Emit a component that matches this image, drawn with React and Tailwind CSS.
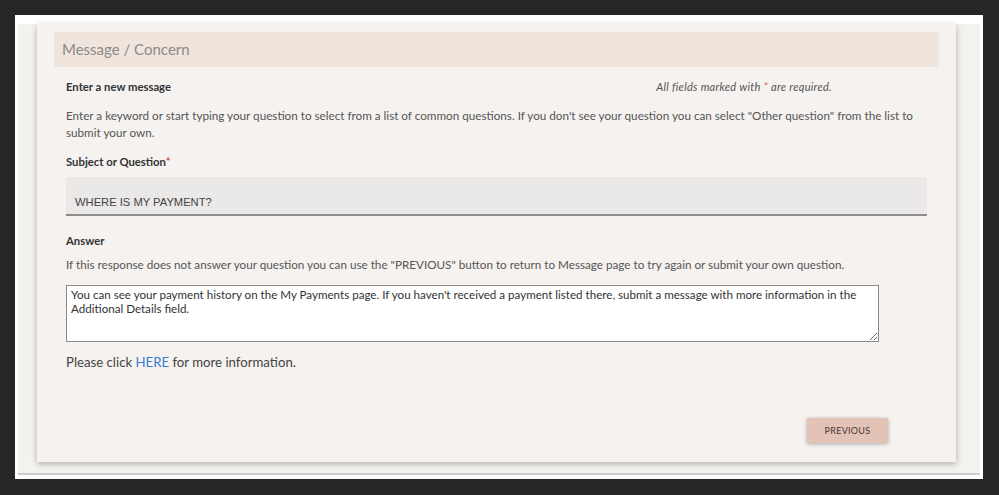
export default function App() {
  const font = { fontFamily: "Lato, 'Open Sans', sans-serif" };
  return (
    <div className="w-[999px] h-[495px] bg-[#262626] pt-[15px] pl-[15px]" style={font}>
      <div className="w-[968px] h-[464px] bg-white pt-[9px] px-[3px]">
        <div className="h-[451px] bg-[#f3f2ef] border-b-2 border-[#cfcdc8] pl-[19px]">
          <div className="w-[919px] h-[438px] bg-[#f5f2f0] shadow-[0_2px_6px_rgba(0,0,0,0.28)] pt-2 px-[17px]">
            <div className="h-[35px] bg-[#efe5dc] flex items-center pl-2 text-[15px] text-[#8d8986]">
              Message / Concern
            </div>
            <div className="px-3">
              <div className="mt-[13px] h-[14px] flex items-center justify-between pr-[95px] leading-[14px]">
                <span className="text-[11.3px] font-bold text-[#333]">Enter a new message</span>
                <span className="text-[11px] tracking-[0.3px] italic text-[#555]">
                  All fields marked with <span className="text-[#d9534f]">*</span> are required.
                </span>
              </div>
              <p className="mt-[13px] text-[11.7px] leading-[17px] text-[#555]">
                Enter a keyword or start typing your question to select from a list of common questions. If you don't see your question you can select "Other question" from the list to
                <br />
                submit your own.
              </p>
              <div className="mt-[14px] h-[14px] leading-[14px] text-[11.3px] font-bold text-[#333]">
                Subject or Question<span className="text-[#d9534f]">*</span>
              </div>
              <div
                className="mt-2 h-[39px] bg-[#ebe8e8] border-b-2 border-[#8f8d8c] flex items-end pb-[3px] pl-[9px] text-[11.2px] text-[#444]"
                style={{ fontFamily: "'Liberation Sans', Arial, sans-serif" }}
              >
                WHERE IS MY PAYMENT?
              </div>
              <div className="mt-[18px] h-[14px] leading-[14px] text-[11.3px] font-bold text-[#333]">Answer</div>
              <p className="mt-2 text-[11.7px] leading-[17px] text-[#555]">
                If this response does not answer your question you can use the "PREVIOUS" button to return to Message page to try again or submit your own question.
              </p>
              <textarea
                readOnly
                className="mt-[12px] block w-[813px] h-[57px] bg-white border border-[#8a8a8a] pt-[2px] px-1 text-[11.6px] leading-[14px] text-[#333] outline-none"
                style={font}
                value={"You can see your payment history on the My Payments page. If you haven't received a payment listed there, submit a message with more information in the Additional Details field."}
              />
              <p className="mt-[11px] text-[13.2px] leading-[18px] text-[#444]">
                Please click <span className="text-[#3a7bd5]">HERE</span> for more information.
              </p>
              <div className="mt-[47px] flex justify-end pr-[39px]">
                <div className="w-[81px] h-[25px] bg-[#e3c3b6] shadow-[0_1px_4px_rgba(0,0,0,0.3)] flex items-center justify-center text-[9px] tracking-[0.3px] text-[#4a3833]">
                  PREVIOUS
                </div>
              </div>
            </div>
          </div>
        </div>
      </div>
    </div>
  );
}
